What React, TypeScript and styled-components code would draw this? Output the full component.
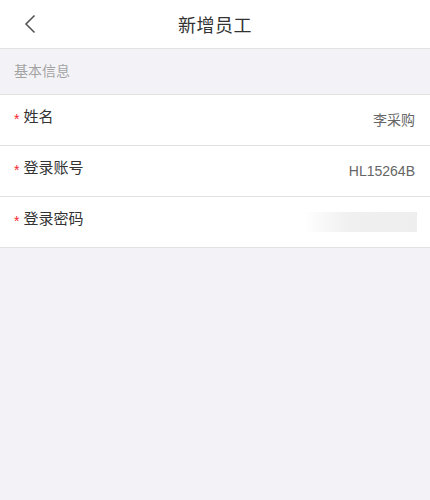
import styled, { createGlobalStyle } from 'styled-components';

const GlobalStyle = createGlobalStyle`
  html, body {
    margin: 0;
    padding: 0;
    background: #f3f3f7;
    font-family: "Liberation Sans", Arial, "Noto Sans CJK SC", sans-serif;
  }
`;

const Page = styled.div`
  width: 430px;
  min-height: 500px;
  background: #f3f3f7;
`;

const NavBar = styled.header`
  height: 48px;
  background: #fff;
  border-bottom: 1px solid #e2e2e2;
  display: flex;
  align-items: center;
  justify-content: center;
  position: relative;
`;

const BackBtn = styled.button`
  position: absolute;
  left: 18px;
  top: 12px;
  width: 24px;
  height: 24px;
  padding: 0;
  border: 0;
  background: none;
  display: flex;
  align-items: center;
  justify-content: center;
`;

const Title = styled.h1`
  margin: 0;
  font-size: 18px;
  font-weight: normal;
  color: #333;
  letter-spacing: 0.5px;
`;

const SectionLabel = styled.div`
  height: 46px;
  padding: 0 0 4px 14px;
  box-sizing: border-box;
  display: flex;
  align-items: center;
  font-size: 14px;
  color: #a3a3a3;
  border-bottom: 1px solid #e2e2e2;
`;

const Form = styled.div`
  background: #fff;
`;

const Row = styled.div`
  height: 50px;
  border-bottom: 1px solid #e2e2e2;
  display: flex;
  justify-content: space-between;
  padding: 0 15px 0 14px;
`;

const Label = styled.div`
  padding-top: 13px;
  height: 18px;
  font-size: 15px;
  line-height: 18px;
  color: #333;
  display: flex;
  align-items: center;
`;

const Star = styled.span`
  color: #f5242d;
  font-size: 14px;
  margin-right: 4px;
  padding-top: 3px;
`;

const Value = styled.div`
  padding-top: 16px;
  font-size: 14px;
  line-height: 18px;
  color: #666;
`;

const Masked = styled.div`
  margin-top: 15px;
  width: 114px;
  height: 20px;
  margin-right: -2px;
  background: linear-gradient(to right, #fff 0%, #f0f0f0 40%, #eeeeee 100%);
`;

const fields = [
  { label: '姓名', value: '李采购' },
  { label: '登录账号', value: 'HL15264B' },
  { label: '登录密码', value: null },
];

export default function App() {
  return (
    <Page>
      <GlobalStyle />
      <NavBar>
        <BackBtn aria-label="返回">
          <svg width="12" height="20" viewBox="0 0 12 20">
            <path d="M10.5 1.5 L2 10 L10.5 18.5" fill="none" stroke="#555" strokeWidth="1.6" />
          </svg>
        </BackBtn>
        <Title>新增员工</Title>
      </NavBar>
      <SectionLabel>基本信息</SectionLabel>
      <Form>
        {fields.map((f) => (
          <Row key={f.label}>
            <Label>
              <Star>*</Star>
              {f.label}
            </Label>
            {f.value ? <Value>{f.value}</Value> : <Masked />}
          </Row>
        ))}
      </Form>
    </Page>
  );
}
